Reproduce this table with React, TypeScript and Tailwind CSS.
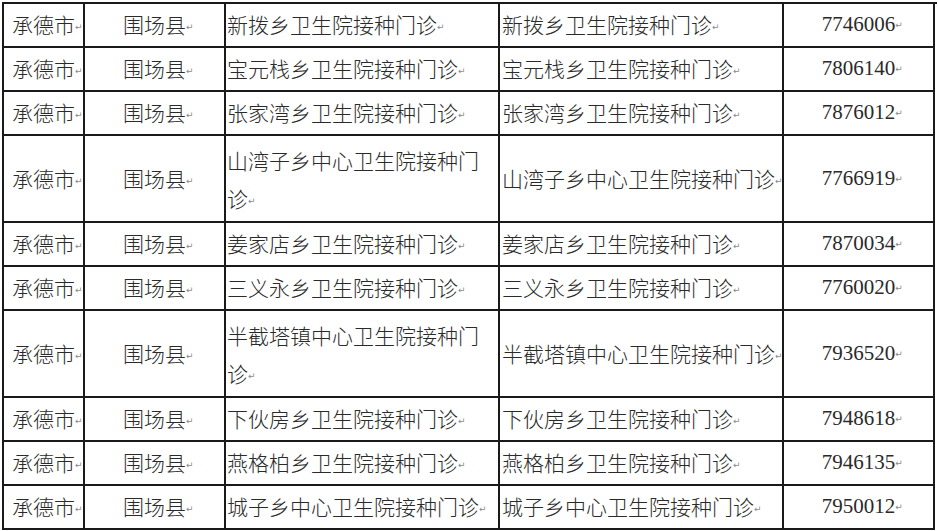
import React from 'react';

type Row = {
  clinic: string;
  wrap?: [string, string];
  phone: string;
};

const rows: Row[] = [
  { clinic: '新拨乡卫生院接种门诊', phone: '7746006' },
  { clinic: '宝元栈乡卫生院接种门诊', phone: '7806140' },
  { clinic: '张家湾乡卫生院接种门诊', phone: '7876012' },
  { clinic: '山湾子乡中心卫生院接种门诊', wrap: ['山湾子乡中心卫生院接种门', '诊'], phone: '7766919' },
  { clinic: '姜家店乡卫生院接种门诊', phone: '7870034' },
  { clinic: '三义永乡卫生院接种门诊', phone: '7760020' },
  { clinic: '半截塔镇中心卫生院接种门诊', wrap: ['半截塔镇中心卫生院接种门', '诊'], phone: '7936520' },
  { clinic: '下伙房乡卫生院接种门诊', phone: '7948618' },
  { clinic: '燕格柏乡卫生院接种门诊', phone: '7946135' },
  { clinic: '城子乡中心卫生院接种门诊', phone: '7950012' },
];

const cjk = "font-['SimSun','Noto_Sans_CJK_SC',sans-serif] font-light";

// Word paragraph mark after each cell's text
function Mark() {
  return (
    <span className="inline-block w-0 overflow-visible whitespace-nowrap align-[3px] text-[9px] leading-none font-normal text-[#8a8a8a] font-['DejaVu_Sans',sans-serif]">
      ↵
    </span>
  );
}

const cell = 'border-r-2 border-b-2 border-[#1a1a1a] flex items-center';

export default function App() {
  return (
    <div className="w-[938px] h-[531px] bg-white overflow-hidden">
      <div className="ml-[2px] mt-[2px] w-[935px] border-l-2 border-t-2 border-[#1a1a1a] grid grid-cols-[81px_141px_274px_284px_151px] text-[21px] text-[#2a2a2a]">
        {rows.map((r, i) => {
          const h = r.wrap ? 'h-[87px]' : 'h-[44px]';
          return (
            <React.Fragment key={i}>
              <div className={`${cell} ${h} justify-center ${cjk}`}>
                <span>承德市<Mark /></span>
              </div>
              <div className={`${cell} ${h} justify-center ${cjk}`}>
                <span>围场县<Mark /></span>
              </div>
              <div className={`${cell} ${h} pl-[1px] ${cjk}`}>
                {r.wrap ? (
                  <div className="leading-[38px]">
                    <div>{r.wrap[0]}</div>
                    <div>{r.wrap[1]}<Mark /></div>
                  </div>
                ) : (
                  <span className="whitespace-nowrap">{r.clinic}<Mark /></span>
                )}
              </div>
              <div className={`${cell} ${h} pl-[2px] ${cjk}`}>
                <span className="whitespace-nowrap">{r.clinic}<Mark /></span>
              </div>
              <div className={`${cell} ${h} justify-center font-['Liberation_Serif',serif]`}>
                <span>{r.phone}<Mark /></span>
              </div>
            </React.Fragment>
          );
        })}
      </div>
    </div>
  );
}
